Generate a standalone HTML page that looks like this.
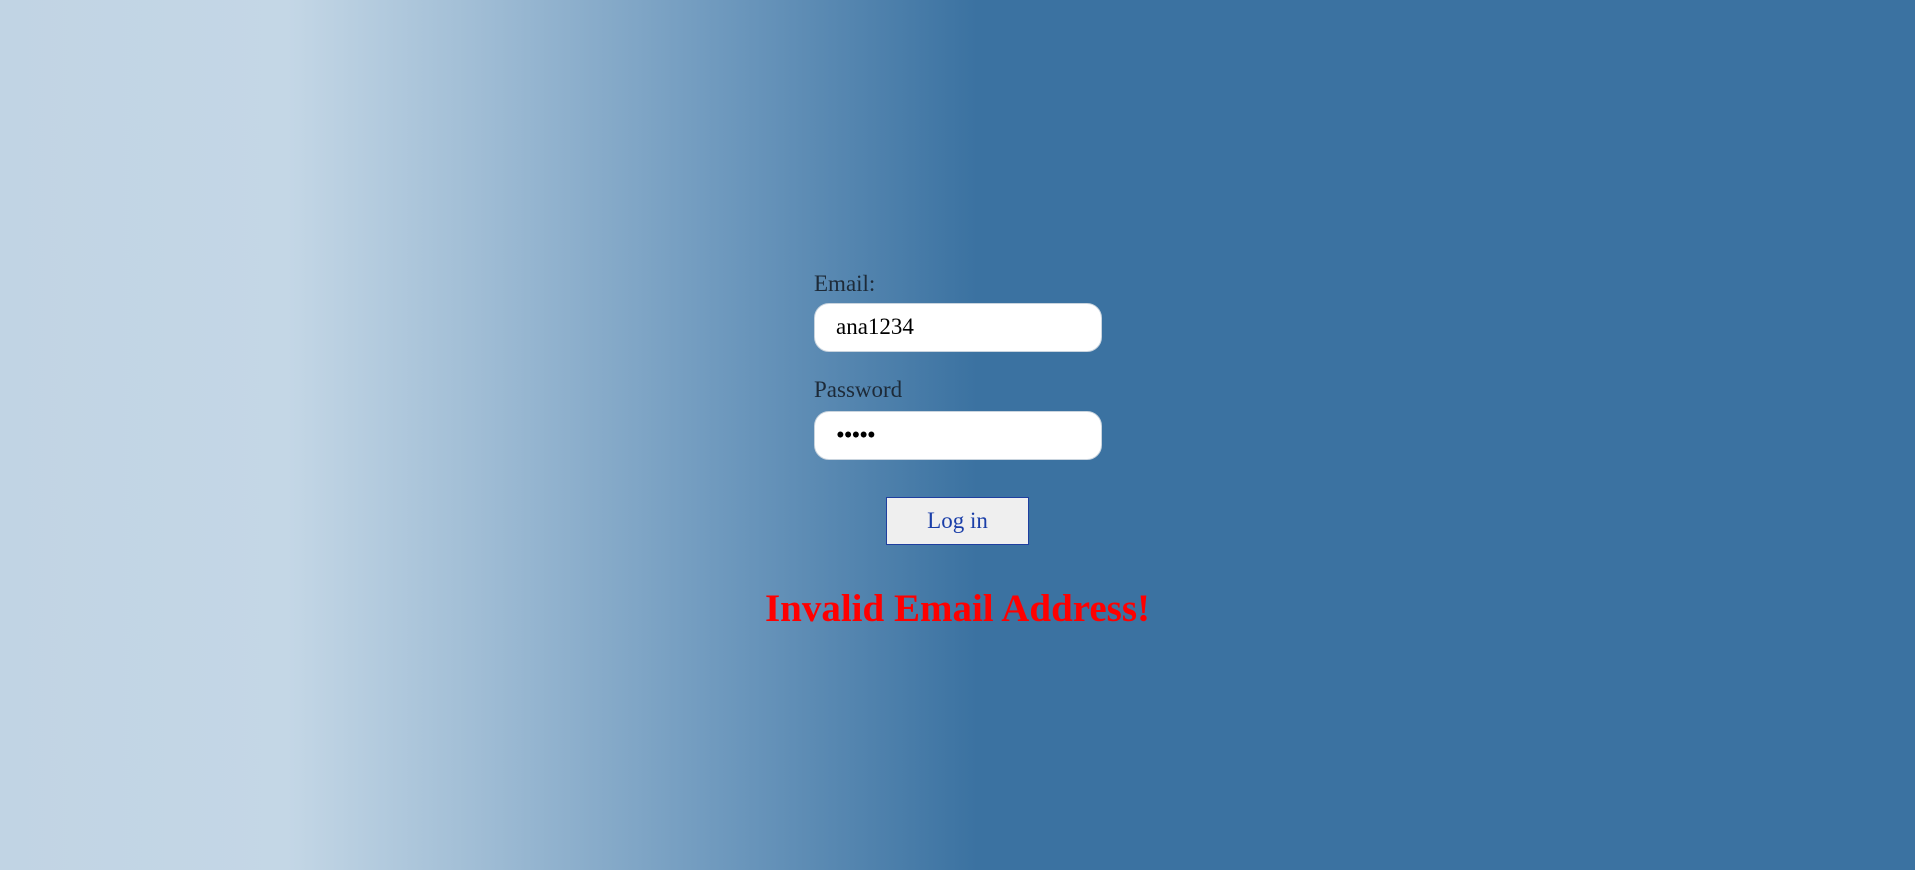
<!DOCTYPE html>
<html><head><meta charset="utf-8"><style>
html,body{margin:0;height:100%;}
body{width:1915px;height:870px;background:linear-gradient(to right,#c1d4e4 0%,#c4d7e6 15%,#a0bdd5 25%,#6d98bd 38%,#3b72a1 51%,#3b72a1 100%);font-family:"Liberation Serif",serif;position:relative;overflow:hidden;}
.lbl{position:absolute;left:814px;font-size:23px;color:#1d2a38;}
.inp{position:absolute;left:814px;width:286px;height:47px;background:#fff;border:1px solid #c9d4de;border-radius:15px;box-sizing:content-box;}
.inp span{position:absolute;left:21px;top:10px;font-size:23px;color:#000;}
.btn{position:absolute;left:886px;top:497px;width:141px;height:46px;background:#efefef;border:1px solid #1f3f9f;text-align:center;line-height:46px;font-size:23px;color:#1a3ea8;}
.err{position:absolute;left:0;width:1915px;top:586px;text-align:center;font-size:39px;font-weight:bold;color:#ff0000;}
</style></head><body>
<div class="lbl" style="top:271px">Email:</div>
<div class="inp" style="top:303px"><span>ana1234</span></div>
<div class="lbl" style="top:377px">Password</div>
<div class="inp" style="top:411px"><span style="top:10px;font-size:25px;letter-spacing:-1px">•••••</span></div>
<div class="btn">Log in</div>
<div class="err">Invalid Email Address!</div>
</body></html>
